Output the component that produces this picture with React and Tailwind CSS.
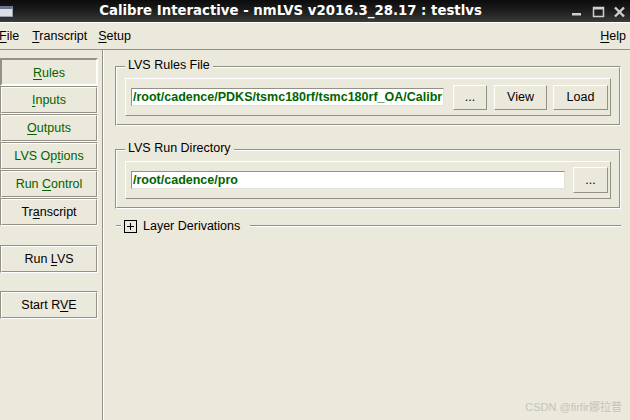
import { useState } from 'react';
import clsx from 'clsx';

const DARK = 'border-[#939088]';

function U({ children }) {
  return <span className="underline underline-offset-2">{children}</span>;
}

function SideButton({ children, pressed, green, className }) {
  return (
    <div className={clsx('w-[98px] border border-t-[#939088] border-l-[#939088] border-b-white border-r-white', className)}>
      <div
        className={clsx(
          'h-[26px] flex items-center justify-center border whitespace-nowrap',
          pressed
            ? 'border-t-[#939088] border-l-[#939088] border-b-white border-r-white pt-[3px]'
            : 'border-t-white border-l-white border-b-[#939088] border-r-[#939088]',
          green ? 'text-[#006400]' : 'text-black'
        )}
      >
        <span>{children}</span>
      </div>
    </div>
  );
}

function Button({ children, className }) {
  return (
    <div className={clsx('flex items-center justify-center border border-t-white border-l-white border-b-[#939088] border-r-[#939088] text-black', className)}>
      <span>{children}</span>
    </div>
  );
}

function Entry({ value, className }) {
  return (
    <div className={clsx('h-[18px] bg-white border border-t-[#939088] border-l-[#939088] border-b-[#e2e0d7] border-r-[#e2e0d7] overflow-hidden whitespace-nowrap font-bold text-[#006400] pl-[1px] leading-[16px]', className)}>
      {value}
    </div>
  );
}

function Group({ label, children, className }) {
  return (
    <div className={clsx('relative w-[506px] h-[60px] border border-t-[#939088] border-l-[#939088] border-b-white border-r-white', className)}>
      <div className="h-full border border-t-white border-l-white border-b-[#939088] border-r-[#939088] pl-[8px] pt-[10px]">
        <div className="w-[486px] h-[38px] border border-t-white border-l-white border-b-[#939088] border-r-[#939088] flex items-center pl-[5px]">
          {children}
        </div>
      </div>
      <span className="absolute left-[9px] top-[-10px] px-[3px] bg-[#ebe8dc] leading-[16px]">{label}</span>
    </div>
  );
}

function Etched({ className }) {
  return <div className={clsx('h-[2px] border-t border-t-[#939088] border-b border-b-white', className)} />;
}

export default function App() {
  const [view, setView] = useState('rules');

  return (
    <div className="w-[630px] h-[420px] flex flex-col bg-[#ebe8dc] overflow-hidden font-['Liberation_Sans',Arial,sans-serif] text-[12.5px] text-black">
      {/* title bar */}
      <div className="h-[22px] flex items-center bg-gradient-to-b from-[#0c0c0c] via-[#1e1e1e] to-[#3a3a3a]">
        <div className="w-[13px] h-[11px] bg-[#dcdfe6] border-t-[3px] border-t-[#6a7590] border-r border-b border-[#9aa0b0]" />
        <div className="flex-1 flex justify-center pl-[2px] text-white font-bold text-[13.3px] font-['DejaVu_Sans',sans-serif] whitespace-nowrap">
          Calibre Interactive - nmLVS v2016.3_28.17 : testlvs
        </div>
        <svg width="64" height="22" viewBox="0 0 64 22" className="shrink-0">
          <rect x="6" y="13" width="9" height="2.5" fill="#cfcfcf" />
          <rect x="27.5" y="7.5" width="10" height="9" fill="none" stroke="#cfcfcf" strokeWidth="1.5" />
          <rect x="27" y="7" width="11" height="2.5" fill="#cfcfcf" />
          <path d="M49 7.5 L58 16.5 M58 7.5 L49 16.5" stroke="#cfcfcf" strokeWidth="2.4" />
        </svg>
      </div>

      {/* menu bar */}
      <div className="h-[28px] flex items-center border-t border-t-white border-b border-b-[#939088] whitespace-nowrap">
        <span className="-ml-[1px]"><U>F</U>ile</span>
        <span className="ml-[13px]"><U>T</U>ranscript</span>
        <span className="ml-[11px]"><U>S</U>etup</span>
        <span className="ml-auto mr-[4px]"><U>H</U>elp</span>
      </div>

      {/* body */}
      <div className="flex-1 flex min-h-0">
        <div className={clsx('w-[103px] border-r pt-[8px] flex flex-col', DARK)}>
          <div onClick={() => setView('rules')}>
            <SideButton pressed={view === 'rules'} green><U>R</U>ules</SideButton>
          </div>
          <SideButton green><U>I</U>nputs</SideButton>
          <SideButton green><U>O</U>utputs</SideButton>
          <SideButton green>LVS Op<U>t</U>ions</SideButton>
          <SideButton green>Run <U>C</U>ontrol</SideButton>
          <SideButton>Tr<U>a</U>nscript</SideButton>
          <SideButton className="mt-[19px]">Run <U>L</U>VS</SideButton>
          <SideButton className="mt-[18px]">Start R<U>V</U>E</SideButton>
        </div>

        <div className="flex-1 flex flex-col border-l border-l-white pl-[11px] pt-[16px]">
          <Group label="LVS Rules File">
            <Entry className="w-[313px]" value="/root/cadence/PDKS/tsmc180rf/tsmc180rf_OA/Calibr" />
            <Button className="ml-[9px] w-[34px] h-[25px]">...</Button>
            <Button className="ml-[7px] w-[53px] h-[25px]">View</Button>
            <Button className="ml-[6px] w-[55px] h-[25px]">Load</Button>
          </Group>

          <Group label="LVS Run Directory" className="mt-[23px]">
            <Entry className="w-[434px]" value="/root/cadence/pro" />
            <Button className="ml-[8px] w-[35px] h-[26px]">...</Button>
          </Group>

          <div className="mt-[9px] h-[16px] w-[506px] flex items-center">
            <Etched className="w-[5px] ml-[1px]" />
            <div className="ml-[3px] w-[13px] h-[13px] border border-black flex items-center justify-center">
              <svg width="11" height="11" viewBox="0 0 11 11">
                <path d="M2 5.5 H9 M5.5 2 V9" stroke="#000" strokeWidth="1" />
              </svg>
            </div>
            <span className="ml-[6px] whitespace-nowrap">Layer Derivations</span>
            <Etched className="flex-1 ml-[10px]" />
          </div>

          <div className="mt-auto self-end pr-[8px] pb-[5px] text-[11px] text-[#c6c4ba] font-['Liberation_Sans','Noto_Sans_CJK_SC',sans-serif]">
            CSDN @firfir娜拉普
          </div>
        </div>
      </div>
    </div>
  );
}
